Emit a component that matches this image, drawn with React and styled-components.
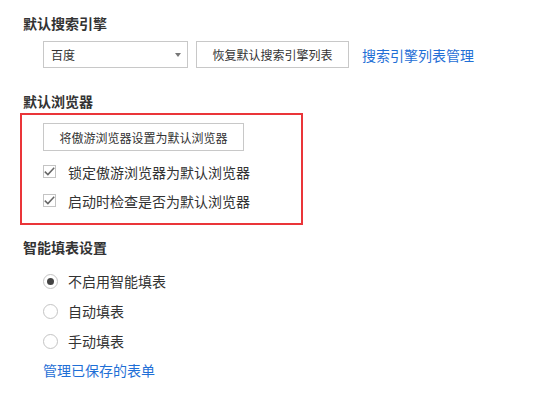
import styled, { createGlobalStyle } from 'styled-components';

const GlobalStyle = createGlobalStyle`
  html, body {
    margin: 0;
    padding: 0;
    background: #ffffff;
  }
  body {
    font-family: "Noto Sans CJK SC", "Noto Sans", sans-serif;
    color: #333333;
  }
`;

const Page = styled.div`
  padding: 13px 0 0 20px;
  width: 557px;
  height: 393px;
  box-sizing: border-box;
`;

const Heading = styled.div`
  margin: ${(p) => p.$top || 0}px 0 0 3px;
  height: 20px;
  line-height: 20px;
  font-size: 14px;
  font-weight: 700;
  color: #333;
`;

const Content = styled.div`
  padding-left: 23px;
`;

const Toolbar = styled.div`
  display: flex;
  align-items: center;
  margin-top: 8px;
  height: 27px;
`;

const Select = styled.div`
  position: relative;
  width: 145px;
  height: 27px;
  box-sizing: border-box;
  border: 1px solid #c8c8c8;
  display: flex;
  align-items: center;
  padding-left: 7px;
  font-size: 12px;
  color: #333;

  &::after {
    content: '';
    position: absolute;
    right: 6px;
    top: 11px;
    border-left: 3px solid transparent;
    border-right: 3px solid transparent;
    border-top: 4px solid #777;
  }
`;

const Button = styled.div`
  width: ${(p) => p.$w}px;
  height: ${(p) => p.$h || 27}px;
  margin-left: ${(p) => p.$ml || 0}px;
  box-sizing: border-box;
  border: 1px solid #c8c8c8;
  background: #fff;
  display: flex;
  align-items: center;
  justify-content: center;
  font-size: 12px;
  color: #333;
`;

const Link = styled.a`
  font-size: 14px;
  color: #1f6fd6;
  text-decoration: none;
  margin-left: ${(p) => p.$ml || 0}px;
  cursor: pointer;
`;

const HighlightBox = styled.div`
  margin-top: 2px;
  width: 283px;
  box-sizing: border-box;
  border: 2px solid #ea3539;
  padding: 8px 0 8px 21px;
`;

const OptionRow = styled.label`
  display: flex;
  align-items: center;
  height: ${(p) => p.$h || 29}px;
  font-size: 14px;
  color: #333;
  margin-top: ${(p) => p.$top || 0}px;
`;

const Box = styled.span`
  width: 13px;
  height: 13px;
  box-sizing: border-box;
  border: 1px solid #c4c4c4;
  background: #fff;
  margin-right: 12px;
  display: flex;
  align-items: center;
  justify-content: center;
  flex-shrink: 0;
`;

const Radio = styled.span`
  width: 15px;
  height: 15px;
  box-sizing: border-box;
  border: 1px solid #c4c4c4;
  border-radius: 50%;
  background: #fff;
  margin-right: 10px;
  display: flex;
  align-items: center;
  justify-content: center;
  flex-shrink: 0;

  &::after {
    content: '';
    width: 7px;
    height: 7px;
    border-radius: 50%;
    background: ${(p) => (p.$on ? '#444' : 'transparent')};
  }
`;

const LinkRow = styled.div`
  height: 28px;
  display: flex;
  align-items: center;
`;

function Check() {
  return (
    <Box>
      <svg width="11" height="11" viewBox="0 0 11 11">
        <polyline points="0.8,5.6 3.9,8.6 10.2,1.8" fill="none" stroke="#666" strokeWidth="1.5" />
      </svg>
    </Box>
  );
}

export default function App() {
  return (
    <Page>
      <GlobalStyle />
      <Heading>默认搜索引擎</Heading>
      <Content>
        <Toolbar>
          <Select>百度</Select>
          <Button $w={153} $ml={8}>恢复默认搜索引擎列表</Button>
          <Link $ml={13}>搜索引擎列表管理</Link>
        </Toolbar>
      </Content>

      <Heading $top={23}>默认浏览器</Heading>
      <HighlightBox>
        <Button $w={201} $h={28}>将傲游浏览器设置为默认浏览器</Button>
        <OptionRow $top={6}>
          <Check />
          锁定傲游浏览器为默认浏览器
        </OptionRow>
        <OptionRow>
          <Check />
          启动时检查是否为默认浏览器
        </OptionRow>
      </HighlightBox>

      <Heading $top={12}>智能填表设置</Heading>
      <Content>
        <OptionRow $h={30} $top={9}>
          <Radio $on />
          不启用智能填表
        </OptionRow>
        <OptionRow $h={30}>
          <Radio />
          自动填表
        </OptionRow>
        <OptionRow $h={30}>
          <Radio />
          手动填表
        </OptionRow>
        <LinkRow>
          <Link>管理已保存的表单</Link>
        </LinkRow>
      </Content>
    </Page>
  );
}
